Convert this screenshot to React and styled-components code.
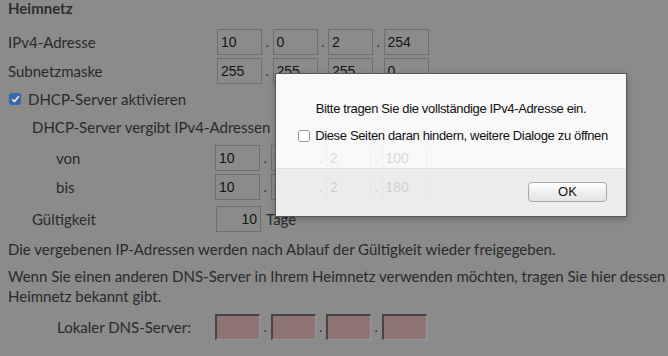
import React from "react";
import styled, { createGlobalStyle } from "styled-components";

const Global = createGlobalStyle`
  html, body { margin: 0; padding: 0; background: #8b8b8b; }
  body { overflow: hidden; width: 668px; height: 356px; }
`;

const Page = styled.div`
  position: relative;
  width: 668px;
  height: 356px;
  overflow: hidden;
  box-sizing: border-box;
  padding: 0 0 0 8px;
  background: #8b8b8b;
  font-family: Lato, "Noto Sans", sans-serif;
  font-size: 15px;
  line-height: 20px;
  color: #2a2a2a;
`;

const Heading = styled.div`
  font-weight: 700;
  line-height: 16px;
  color: #2e2e2e;
`;

const Row = styled.div`
  display: flex;
  align-items: center;
  height: 26px;
  margin-top: ${(p) => p.mt}px;
  padding-left: ${(p) => p.indent || 0}px;
  white-space: nowrap;
`;

const Label = styled.div`
  flex: none;
  width: ${(p) => p.to - 8 - (p.indent || 0)}px;
`;

const FieldBox = styled.div`
  flex: none;
  box-sizing: border-box;
  width: 45px;
  height: 26px;
  border: 1px solid ${(p) => (p.ghost ? "#c4c4c4" : "#6f6f6f")};
  padding: 0 3px;
  display: flex;
  align-items: center;
  justify-content: ${(p) => (p.right ? "flex-end" : "flex-start")};
  font-family: "Liberation Sans", Arial, sans-serif;
  font-size: 14px;
  color: ${(p) => (p.invalid ? "#c01010" : "#141414")};
  ${(p) => p.ghost && "position: relative; z-index: 3; opacity: 0.14; border-top-color: transparent; border-bottom-color: transparent;"}
`;

const DnsBox = styled.div`
  flex: none;
  box-sizing: border-box;
  width: 45px;
  height: 26px;
  background: #8f7474;
  border-top: 2px solid #454545;
  border-left: 2px solid #454545;
  border-right: 1px solid #979797;
  border-bottom: 1px solid #979797;
`;

const Dot = styled.span`
  flex: none;
  width: ${(p) => p.w || 10.5}px;
  text-align: center;
  font-family: "Liberation Sans", Arial, sans-serif;
  font-size: 14px;
  color: #1e1e1e;
  ${(p) => p.ghost && "position: relative; z-index: 3; opacity: 0.14;"}
`;

const Unit = styled.span`
  margin-left: 5px;
`;

const Check = styled.span`
  flex: none;
  box-sizing: border-box;
  width: 12px;
  height: 12px;
  margin: 0 7px 0 1px;
  border-radius: 3px;
  background: #3769a8;
  display: flex;
  align-items: center;
  justify-content: center;
`;

const Para = styled.div`
  margin-top: 7px;
  white-space: nowrap;
`;

const Dialog = styled.div`
  position: absolute;
  left: 275px;
  top: 73px;
  width: 352px;
  height: 144px;
  box-sizing: border-box;
  border: 1px solid #575757;
  background: #f8f8f8;
  box-shadow: 0 2px 6px rgba(0, 0, 0, 0.25);
  z-index: 2;
  display: flex;
  flex-direction: column;
  font-family: "Liberation Sans", Arial, sans-serif;
  font-size: 13px;
  letter-spacing: -0.35px;
  color: #111;
`;

const DialogBody = styled.div`
  height: 94px;
  box-sizing: border-box;
  padding-top: 26px;
  display: flex;
  flex-direction: column;
  align-items: center;
  gap: 9px;
  line-height: 18px;
`;

const CheckLine = styled.label`
  display: flex;
  align-items: center;
  gap: 5px;
  margin-left: 4px;
`;

const DialogCheck = styled.span`
  box-sizing: border-box;
  width: 12px;
  height: 12px;
  border: 1px solid #9a9a9a;
  border-radius: 3px;
  background: #fff;
`;

const Footer = styled.div`
  flex: 1;
  background: #ececec;
  border-top: 1px solid #e0e0e0;
  display: flex;
  justify-content: flex-end;
  align-items: flex-start;
  padding: 13px 19px 0 0;
`;

const Button = styled.button`
  width: 79px;
  height: 20px;
  box-sizing: border-box;
  border: 1px solid #a7a7a7;
  border-radius: 4px;
  background: linear-gradient(#ffffff, #efefef 50%, #e4e4e4);
  font-family: "Liberation Sans", Arial, sans-serif;
  font-size: 13px;
  color: #111;
  padding: 0;
  line-height: 18px;
`;

function IpRow({ mt, indent = 0, to, label, values, ghostFrom = 99, invalid = [] }) {
  const items = [];
  values.forEach((v, i) => {
    const ghost = i >= ghostFrom;
    if (i > 0) items.push(<Dot key={"d" + i} ghost={ghost}>.</Dot>);
    items.push(
      <FieldBox key={"f" + i} ghost={ghost} invalid={invalid.includes(i)}>
        {v}
      </FieldBox>
    );
  });
  return (
    <Row mt={mt} indent={indent}>
      <Label to={to} indent={indent}>{label}</Label>
      {items}
    </Row>
  );
}

export default function App() {
  return (
    <Page>
      <Global />
      <Heading>Heimnetz</Heading>
      <IpRow mt={13} to={217} label="IPv4-Adresse" values={["10", "0", "2", "254"]} />
      <IpRow mt={3} to={217} label="Subnetzmaske" values={["255", "255", "255", "0"]} />
      <Row mt={2}>
        <Check>
          <svg width="9" height="8" viewBox="0 0 9 8">
            <path d="M1.2 4.2 L3.5 6.5 L7.8 1.3" fill="none" stroke="#e8eef6" strokeWidth="1.6" />
          </svg>
        </Check>
        DHCP-Server aktivieren
      </Row>
      <Row mt={2} indent={24}>DHCP-Server vergibt IPv4-Adressen</Row>
      <IpRow mt={5} indent={48} to={215} label="von" values={["10", "0", "2", "100"]} ghostFrom={2} invalid={[1]} />
      <IpRow mt={3} indent={48} to={215} label="bis" values={["10", "0", "2", "180"]} ghostFrom={2} invalid={[1]} />
      <Row mt={6} indent={24}>
        <Label to={216} indent={24}>Gültigkeit</Label>
        <FieldBox right>10</FieldBox>
        <Unit>Tage</Unit>
      </Row>
      <Para>Die vergebenen IP-Adressen werden nach Ablauf der Gültigkeit wieder freigegeben.</Para>
      <Para>
        Wenn Sie einen anderen DNS-Server in Ihrem Heimnetz verwenden möchten, tragen Sie hier dessen IPv4-Adresse ein, die der DHCP-Server im
        <br />
        Heimnetz bekannt gibt.
      </Para>
      <Row mt={8} indent={49}>
        <Label to={215} indent={49}>Lokaler DNS-Server:</Label>
        <DnsBox />
        <Dot>.</Dot>
        <DnsBox />
        <Dot>.</Dot>
        <DnsBox />
        <Dot>.</Dot>
        <DnsBox />
      </Row>
      <Dialog role="dialog">
        <DialogBody>
          <div>Bitte tragen Sie die vollständige IPv4-Adresse ein.</div>
          <CheckLine>
            <DialogCheck />
            Diese Seiten daran hindern, weitere Dialoge zu öffnen
          </CheckLine>
        </DialogBody>
        <Footer>
          <Button>OK</Button>
        </Footer>
      </Dialog>
    </Page>
  );
}
